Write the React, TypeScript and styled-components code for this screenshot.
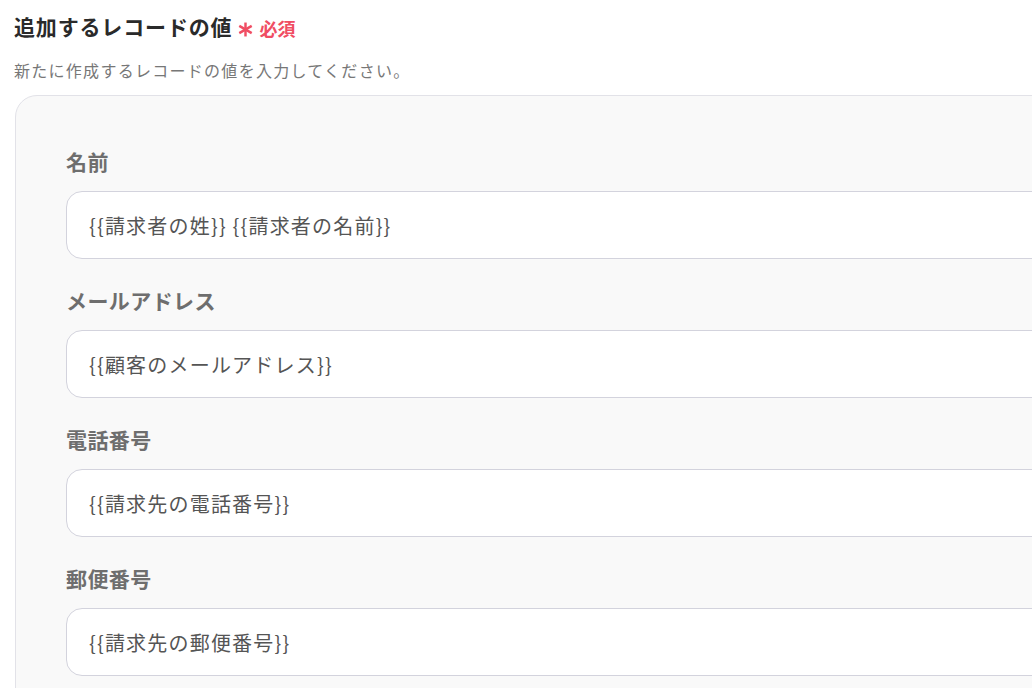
import styled, {createGlobalStyle} from "styled-components";

const GlobalStyle = createGlobalStyle`
  html, body {
    margin: 0;
    padding: 0;
    background: #ffffff;
    overflow: hidden;
  }
  body {
    font-family: "Noto Sans CJK JP", "Noto Sans", sans-serif;
  }
`

const Page = styled.div`
  padding: 10px 0 0 14px;
  width: 1140px;
`

const TitleRow = styled.div`
  display: flex;
  align-items: center;
  gap: 6px;
  height: 32px;
`

const Title = styled.h2`
  margin: 0;
  font-size: 21px;
  font-weight: 700;
  color: #2a2a2a;
  letter-spacing: 0.04em;
`

const Required = styled.span`
  display: flex;
  align-items: center;
  gap: 6px;
  color: #f04d63;
  font-size: 18px;
  font-weight: 700;
  margin-top: 3px;

  svg {
    margin-top: 3px;
  }
`

const Description = styled.p`
  margin: 16px 0 0;
  font-size: 16px;
  color: #777777;
  letter-spacing: 0.08em;
`

const Panel = styled.div`
  margin-top: 13px;
  margin-left: 1px;
  background: #f9f9f9;
  border: 1px solid #e2e2e8;
  border-radius: 22px;
  padding: 50px 0 60px 50px;
  display: flex;
  flex-direction: column;
  gap: 26px;
`

const Field = styled.div`
  display: flex;
  flex-direction: column;
  gap: 15px;
`

const Label = styled.label`
  font-size: 21px;
  font-weight: 700;
  color: #6e6e6e;
  letter-spacing: 0.02em;
  line-height: 30px;
`

const Input = styled.div`
  height: 68px;
  box-sizing: border-box;
  display: flex;
  align-items: center;
  padding: 0 22px;
  background: #ffffff;
  border: 1px solid #d3d3dd;
  border-radius: 16px;
  font-size: 20px;
  letter-spacing: 1.2px;
  color: #555555;
`

// 6本線のアスタリスク
const AsteriskIcon = () => (
    <svg width="15" height="15" viewBox="0 0 14 14" fill="none" stroke="currentColor" strokeWidth="2.3" strokeLinecap="butt">
        <line x1="7" y1="0.5" x2="7" y2="13.5"/>
        <line x1="1.2" y1="3.6" x2="12.8" y2="10.4"/>
        <line x1="1.2" y1="10.4" x2="12.8" y2="3.6"/>
    </svg>
)

const fields = [
    {label: "名前", value: "{{請求者の姓}} {{請求者の名前}}"},
    {label: "メールアドレス", value: "{{顧客のメールアドレス}}"},
    {label: "電話番号", value: "{{請求先の電話番号}}"},
    {label: "郵便番号", value: "{{請求先の郵便番号}}"},
]

const App = () => {
    return (
        <>
            <GlobalStyle/>
            <Page>
                <TitleRow>
                    <Title>追加するレコードの値</Title>
                    <Required><AsteriskIcon/>必須</Required>
                </TitleRow>
                <Description>新たに作成するレコードの値を入力してください。</Description>
                <Panel>
                    {fields.map((f) => (
                        <Field key={f.label}>
                            <Label>{f.label}</Label>
                            <Input>{f.value}</Input>
                        </Field>
                    ))}
                </Panel>
            </Page>
        </>
    )
}

export default App
